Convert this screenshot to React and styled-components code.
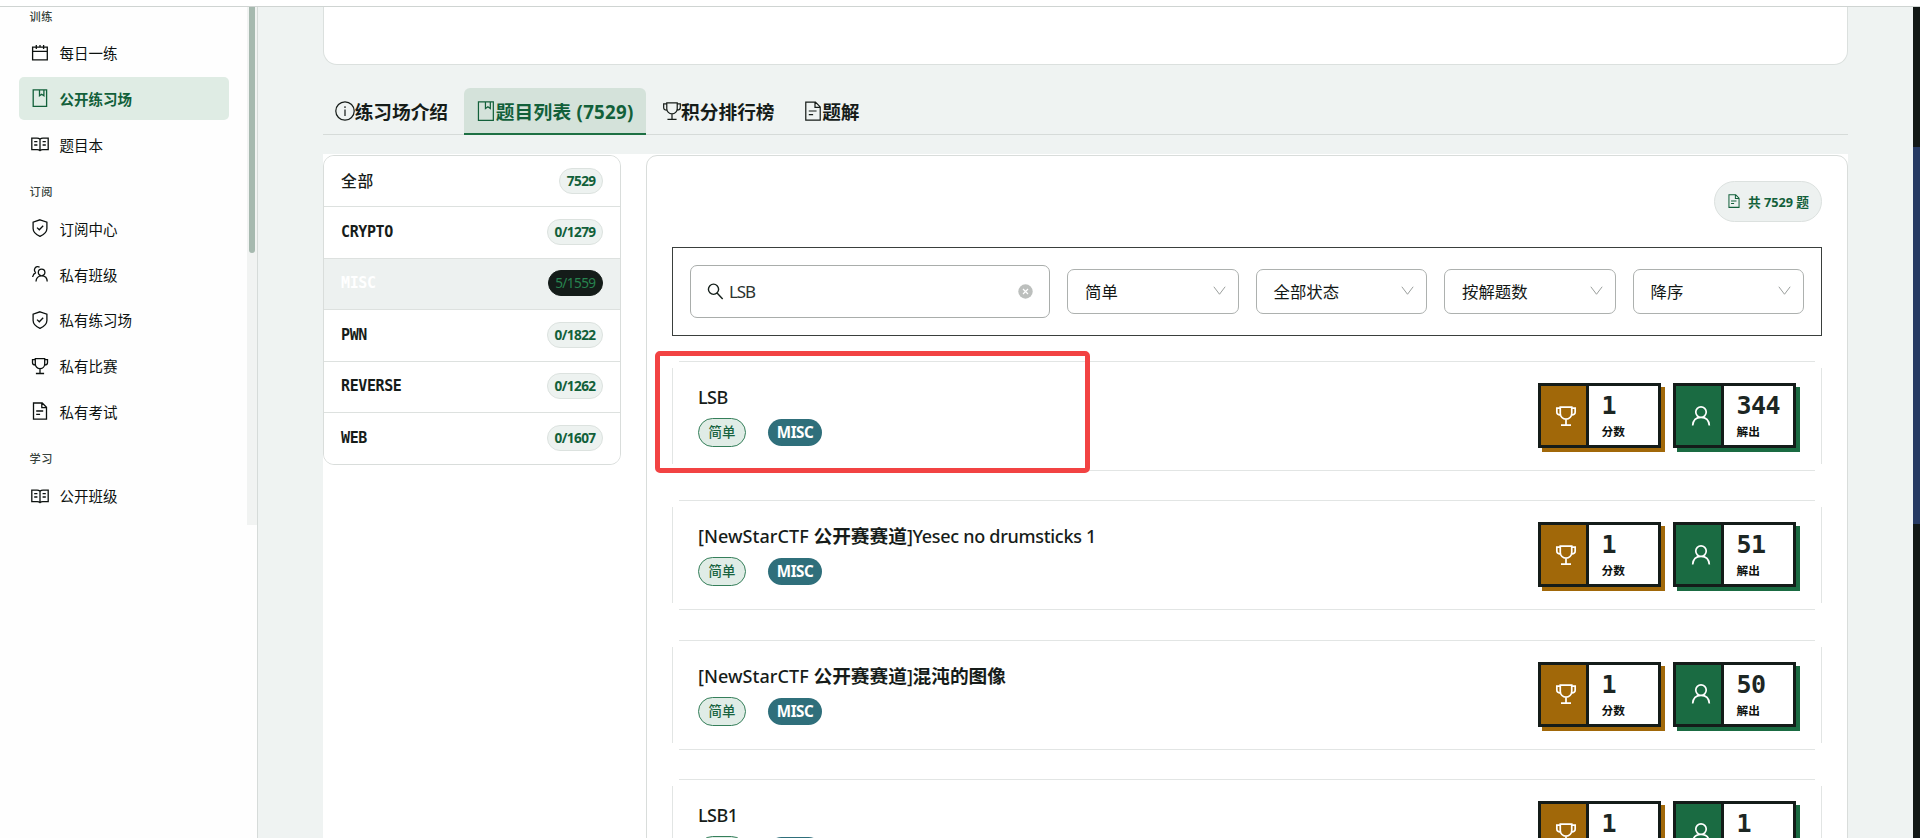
import styled, { createGlobalStyle } from "styled-components";

const sans = `"Noto Sans", "Noto Sans CJK SC", sans-serif`;
const mono = `"DejaVu Sans Mono", "Noto Sans CJK SC", monospace`;

const GlobalStyle = createGlobalStyle`
    *{
        box-sizing: border-box;
    }
    body{
        margin: 0;
        background: #fff;
        color: #15201b;
        font-family: ${sans};
    }
`

const Page = styled.div`
    display: flex;
    flex-direction: column;
    height: 838px;
    overflow: hidden;
`

const TopBar = styled.div`
    flex: none;
    height: 7px;
    background: #fff;
    border-bottom: 1px solid #cfd4d2;
`

const Body = styled.div`
    display: flex;
    flex: 1;
    min-height: 0;
`

/* sidebar */

const Sidebar = styled.aside`
    display: flex;
    flex: none;
    width: 258px;
    background: #fefefe;
    border-right: 1px solid #d6dbd9;
`

const Nav = styled.nav`
    display: flex;
    flex-direction: column;
    width: 247px;
    padding: 2px 18px 0 19px;
`

const NavLabel = styled.div`
    height: 16px;
    margin: ${p => p.$first ? "0" : "18.2px"} 0 ${p => p.$first ? "6.7px" : "7.2px"};
    padding-left: 10.5px;
    font-size: 11.2px;
    font-weight: 500;
    line-height: 16px;
    letter-spacing: 0.6px;
    color: #36423c;
`

const NavList = styled.div`
    display: flex;
    flex-direction: column;
    gap: 2.7px;
`

const NavItem = styled.a`
    display: flex;
    align-items: center;
    gap: 10.5px;
    height: 43px;
    padding: 0 0 1px 12px;
    border-radius: 5px;
    font-size: 14.5px;
    font-weight: ${p => p.$active ? 700 : 400};
    color: ${p => p.$active ? "#12603a" : "#0c110f"};
    background: ${p => p.$active ? "#dfece4" : "transparent"};
`

const NavTrack = styled.div`
    width: 10px;
    height: 518px;
    padding: 0 2px;
    background: #f1f3f2;
`

const NavThumb = styled.div`
    height: 246px;
    border-radius: 0 0 3px 3px;
    background: #a6b9af;
`

/* page scroll rail */

const Rail = styled.div`
    display: flex;
    flex-direction: column;
    flex: none;
    width: 7px;
    background: #121816;
`

const RailThumb = styled.div`
    height: 377px;
    margin-top: 140px;
    background: #263a63;
`

/* main column */

const Main = styled.main`
    flex: 1;
    min-width: 0;
    padding: 0 65px;
    background: #eff3f2;
`

const IntroCard = styled.section`
    height: 58px;
    background: #fff;
    border: 1px solid #dbe0de;
    border-top: 0;
    border-radius: 0 0 14px 14px;
`

const Tabs = styled.div`
    display: flex;
    gap: 3px;
    height: 70px;
    padding-top: 23px;
    border-bottom: 1px solid #d6dbd9;
`

const Tab = styled.button`
    display: flex;
    align-items: center;
    height: 47px;
    padding: 0 13px;
    border: 0;
    border-bottom: 2px solid ${p => p.$active ? "#1d7043" : "transparent"};
    border-radius: 6px 6px 0 0;
    background: ${p => p.$active ? "#d4e2da" : "transparent"};
    font-family: ${sans};
    font-size: 18.7px;
    font-weight: 700;
    letter-spacing: ${p => p.$spacing || 0};
    color: ${p => p.$active ? "#12603a" : "#161c19"};

    svg{
        margin: 0 -0.7px;
    }
`

const Content = styled.div`
    display: flex;
    align-items: flex-start;
    gap: 25px;
    height: 720px;
    margin-top: 19px;
    padding-top: 1px;
    background: #fff;
`

const Categories = styled.ul`
    flex: none;
    width: 298px;
    margin: 0;
    padding: 0;
    overflow: hidden;
    list-style: none;
    background: #fff;
    border: 1px solid #d9dddb;
    border-radius: 11px;
`

const Category = styled.li`
    display: flex;
    align-items: center;
    justify-content: space-between;
    height: 51.4px;
    padding: 0 17px 1px;
    border-bottom: 1px solid #dde1df;
    background: ${p => p.$active ? "#edf1f0" : "#fff"};
    color: ${p => p.$active ? "#fff" : "#161c19"};
    font-family: ${mono};

    &:last-child{
        border-bottom: 0;
    }
`

const CategoryName = styled.span`
    font-size: ${p => p.$cjk ? "15.8px" : "15px"};
    font-weight: ${p => p.$cjk ? 500 : 700};
    letter-spacing: ${p => p.$cjk ? "0.6px" : "-0.4px"};
`

const Count = styled.span`
    height: 26px;
    padding: 0 6.5px;
    border: 1px solid ${p => p.$active ? "#141c19" : "#dce2df"};
    border-radius: 13px;
    background: ${p => p.$active ? "#141c19" : "#edf2f0"};
    color: ${p => p.$active ? "#27834f" : "#12603a"};
    font-family: ${sans};
    font-size: 13.6px;
    font-weight: ${p => p.$active ? 400 : 700};
    line-height: 23px;
    letter-spacing: -0.6px;
`

const Panel = styled.section`
    flex: 1;
    height: 760px;
    padding: 25px 25px 0;
    background: #fff;
    border: 1px solid #d9dddb;
    border-radius: 11px;
`

const PanelHead = styled.div`
    display: flex;
    justify-content: flex-end;
`

const Total = styled.div`
    display: flex;
    align-items: center;
    gap: 7px;
    height: 41px;
    padding: 0 12px 1px 12px;
    border: 1px solid #dce1df;
    border-radius: 21px;
    background: #edf1f0;
    color: #12603a;
    font-size: 12.7px;
    font-weight: 700;
`

const Filters = styled.div`
    display: flex;
    align-items: center;
    gap: 17px;
    height: 89px;
    margin-top: 25px;
    padding: 0 17px 1px;
    border: 1px solid #3a3f3d;
`

const Search = styled.label`
    display: flex;
    align-items: center;
    flex: none;
    width: 360px;
    height: 53px;
    padding: 0 16px;
    border: 1px solid #a9adab;
    border-radius: 7px;
    font-size: 17px;
`

const SearchText = styled.span`
    flex: 1;
    margin-left: 5px;
    color: #2c3330;
    letter-spacing: -1.1px;
`

const Select = styled.div`
    display: flex;
    align-items: center;
    justify-content: space-between;
    flex: 1;
    height: 45px;
    padding: 0 11px 1px 17px;
    border: 1px solid #adb1af;
    border-radius: 7px;
    color: #131816;
    font-size: 16.4px;
`

const Problems = styled.div`
    position: relative;
    display: flex;
    flex-direction: column;
    gap: 29.3px;
    margin-top: 25px;
`

/* outline is drawn as four separate lines so that the corners stay open */
const Problem = styled.article`
    display: flex;
    align-items: center;
    justify-content: space-between;
    height: 110px;
    padding: 0 26px 1px;
    background:
        linear-gradient(#e2e5e4, #e2e5e4) 50% 0 / calc(100% - 14px) 1px no-repeat,
        linear-gradient(#e2e5e4, #e2e5e4) 50% 100% / calc(100% - 14px) 1px no-repeat,
        linear-gradient(#e2e5e4, #e2e5e4) 0 50% / 1px calc(100% - 14px) no-repeat,
        linear-gradient(#e2e5e4, #e2e5e4) 100% 50% / 1px calc(100% - 14px) no-repeat;
`

const ProblemTitle = styled.h4`
    margin: 0;
    height: 26px;
    font-size: 18.7px;
    font-weight: 700;
    line-height: 26px;
    white-space: pre;
    color: #161c19;
`

const Latin = styled.span`
    font-size: 18px;
    font-weight: 500;
    letter-spacing: ${p => p.$spacing || "-0.3px"};
`

const Tags = styled.div`
    display: flex;
    align-items: center;
    gap: 22px;
    margin-top: 8px;
`

const LevelTag = styled.span`
    width: 48px;
    height: 29px;
    border: 1px solid #357f5a;
    border-radius: 15px;
    background: #e0ece6;
    color: #17633e;
    font-size: 13.4px;
    font-weight: 500;
    line-height: 27px;
    text-align: center;
`

const TypeTag = styled.span`
    width: 54px;
    height: 27px;
    border-radius: 14px;
    background: #2f6f7b;
    color: #fff;
    font-size: 15.2px;
    font-weight: 700;
    line-height: 26px;
    letter-spacing: -0.5px;
    text-align: center;
`

const Stats = styled.div`
    display: flex;
    gap: 12px;
`

const Stat = styled.div`
    display: flex;
    width: 123px;
    height: 65px;
    border: 3px solid #141c19;
    background: #fff;
    box-shadow: 4px 4px 0 ${p => p.$color};
`

const StatIcon = styled.div`
    display: flex;
    align-items: center;
    justify-content: center;
    width: 48px;
    padding-left: 5px;
    border-right: 3px solid #141c19;
    background: ${p => p.$color};
    color: #fff;
`

const StatText = styled.div`
    display: flex;
    flex-direction: column;
    padding: 7px 0 0 12.5px;
`

const StatValue = styled.strong`
    height: 26px;
    font-family: ${mono};
    font-size: 25px;
    line-height: 26px;
    letter-spacing: -0.5px;
    color: #1c2623;
`

const StatLabel = styled.span`
    margin-top: 4px;
    font-size: 11.7px;
    font-weight: 700;
    line-height: 16px;
    color: #0c110f;
`

const Highlight = styled.div`
    position: absolute;
    top: -10px;
    left: -17px;
    width: 435px;
    height: 122px;
    border: 5px solid #f24343;
    border-radius: 5px;
`

/* icons */

const shapes = {
    calendar: <path d="M1.6 3.2h14.7v12.6H1.6zM1.6 7.4h14.7M5.3 1v4M9 1v2.2M12.6 1v4" />,
    bookmark: <path d="M2.2.8h13.4v16.6H2.2zM8.5.8v6l2.2-1.6 2.2 1.6v-6" />,
    book: <path d="M9 4.3C8.3 3.6 7.3 3.1 6 3.1H.8v11.5h5.4c1.2 0 2.1.3 2.8 1 .7-.7 1.6-1 2.8-1h5.4V3.1H12c-1.3 0-2.3.5-3 1.2zM9 4.3v11.2M3.2 6.700h3.200M3.200 10h3.200M11.600 6.700h3.200M11.600 10h3.200" />,
    shield: <path d="M9 .8l6.9 2.4v6.3c0 3.4-2.9 6-6.9 7.9-4-1.9-6.9-4.5-6.9-7.9V3.200zM6 8.600l2.300 2.200 3.900-4.100" />,
    users: <path d="M10.600 4.200a3.300 3.300 0 1 1 0 6.600 3.300 3.300 0 0 1 0-6.600zM5 16.600c0-3.600 2.300-5.800 5.600-5.800s5.600 2.200 5.600 5.800M8.600 2.200A3.300 3.300 0 1 0 4.900 7.700M4.900 7.700C3.200 8.400 2 9.800 1.600 12" />,
    trophy: <path d="M4.300 1.700h9.400v5.200a4.700 4.700 0 0 1-9.400 0zM4.300 2.600H1.500v3.200c0 1.500 1.100 2.400 3 2.400M13.700 2.600h2.800v3.200c0 1.500-1.100 2.400-3 2.400M9 11.600v4.800M4.900 16.500h8.200" />,
    doc: <path d="M2.500 1h8.700l4.300 4.300v11.900h-13zM10.800 1v4.700h4.700M5.200 9h7M5.200 12.300h3.900" />,
    info: <><circle cx="9" cy="9" r="8.300" /><path d="M9 4.700v1.500M9 7.700v5.700" /></>,
    user: <path d="M9 .8a4.300 4.300 0 1 1 0 9.400A4.500 4.500 0 0 1 9 .8zM1.500 17.600c.3-4.700 3.200-7.400 7.500-7.400s7.200 2.700 7.500 7.400" />,
    search: <path d="M6.900 1.200a5.400 5.400 0 1 1 0 10.800 5.400 5.400 0 0 1 0-10.800zM10.900 10.800l5.700 6.100" />,
    down: <path d="M2.200 4.500L9 13.500l6.800-9" />,
}

const Icon = ({ name, size = 18, stroke = 1.3, color = "currentColor" }) => (
    <svg width={size} height={size} viewBox="0 0 18 18" fill="none" stroke={color} strokeWidth={stroke} flex="none">
        {shapes[name]}
    </svg>
)

const ClearIcon = () => (
    <svg width="15" height="15" viewBox="0 0 15 15">
        <circle cx="7.5" cy="7.5" r="7.2" fill="#bcbfbd" />
        <path d="M5 5l5 5M10 5l-5 5" stroke="#fff" strokeWidth="1.2" />
    </svg>
)

const menu = [
    { label: "训练", items: [["calendar", "每日一练"], ["bookmark", "公开练习场"], ["book", "题目本"]] },
    { label: "订阅", items: [["shield", "订阅中心"], ["users", "私有班级"], ["shield", "私有练习场"], ["trophy", "私有比赛"], ["doc", "私有考试"]] },
    { label: "学习", items: [["book", "公开班级"]] },
]

const categories = [
    ["全部", "7529"],
    ["CRYPTO", "0/1279"],
    ["MISC", "5/1559"],
    ["PWN", "0/1822"],
    ["REVERSE", "0/1262"],
    ["WEB", "0/1607"],
]

const problems = [
    { title: <Latin $spacing="-0.5px">LSB</Latin>, solved: 344 },
    { title: <><Latin $spacing="0.05px">[NewStarCTF </Latin>公开赛赛道<Latin>]Yesec no drumsticks 1</Latin></>, solved: 51 },
    { title: <><Latin $spacing="0.05px">[NewStarCTF </Latin>公开赛赛道<Latin>]</Latin>混沌的图像</>, solved: 50 },
    { title: <Latin $spacing="-0.5px">LSB1</Latin>, solved: 1 },
]

const App = () => {
    return(
        <>
            <GlobalStyle />
            <Page>
                <TopBar />
                <Body>
                    <Sidebar>
                        <Nav>
                            {menu.map((group, i) => (
                                <div key={group.label}>
                                    <NavLabel $first={i === 0}>{group.label}</NavLabel>
                                    <NavList>
                                        {group.items.map(([icon, text]) => (
                                            <NavItem key={text} $active={text === "公开练习场"}>
                                                <Icon name={icon} />
                                                {text}
                                            </NavItem>
                                        ))}
                                    </NavList>
                                </div>
                            ))}
                        </Nav>
                        <NavTrack>
                            <NavThumb />
                        </NavTrack>
                    </Sidebar>

                    <Main>
                        <IntroCard />
                        <Tabs>
                            <Tab><Icon name="info" size={20} stroke={1.1} />练习场介绍</Tab>
                            <Tab $active $spacing="0.25px"><Icon name="bookmark" size={20} stroke={1.1} />题目列表 (7529)</Tab>
                            <Tab><Icon name="trophy" size={20} stroke={1.1} />积分排行榜</Tab>
                            <Tab><Icon name="doc" size={20} stroke={1.1} />题解</Tab>
                        </Tabs>

                        <Content>
                            <Categories>
                                {categories.map(([name, count]) => (
                                    <Category key={name} $active={name === "MISC"}>
                                        <CategoryName $cjk={name === "全部"}>{name}</CategoryName>
                                        <Count $active={name === "MISC"}>{count}</Count>
                                    </Category>
                                ))}
                            </Categories>

                            <Panel>
                                <PanelHead>
                                    <Total><Icon name="doc" size={14} />共 7529 题</Total>
                                </PanelHead>

                                <Filters>
                                    <Search>
                                        <Icon name="search" size={17} stroke={1.5} />
                                        <SearchText>LSB</SearchText>
                                        <ClearIcon />
                                    </Search>
                                    {["简单", "全部状态", "按解题数", "降序"].map(text => (
                                        <Select key={text}>
                                            {text}
                                            <Icon name="down" size={15} stroke={1.2} color="#9b9f9d" />
                                        </Select>
                                    ))}
                                </Filters>

                                <Problems>
                                    {problems.map((problem, i) => (
                                        <Problem key={i}>
                                            <div>
                                                <ProblemTitle>{problem.title}</ProblemTitle>
                                                <Tags>
                                                    <LevelTag>简单</LevelTag>
                                                    <TypeTag>MISC</TypeTag>
                                                </Tags>
                                            </div>
                                            <Stats>
                                                <Stat $color="#a16809">
                                                    <StatIcon $color="#a16809"><Icon name="trophy" size={22} stroke={1.4} /></StatIcon>
                                                    <StatText>
                                                        <StatValue>1</StatValue>
                                                        <StatLabel>分数</StatLabel>
                                                    </StatText>
                                                </Stat>
                                                <Stat $color="#1a6b42">
                                                    <StatIcon $color="#1a6b42"><Icon name="user" size={20} stroke={1.5} /></StatIcon>
                                                    <StatText>
                                                        <StatValue>{problem.solved}</StatValue>
                                                        <StatLabel>解出</StatLabel>
                                                    </StatText>
                                                </Stat>
                                            </Stats>
                                        </Problem>
                                    ))}
                                    <Highlight />
                                </Problems>
                            </Panel>
                        </Content>
                    </Main>

                    <Rail>
                        <RailThumb />
                    </Rail>
                </Body>
            </Page>
        </>
    )
}

export default App
